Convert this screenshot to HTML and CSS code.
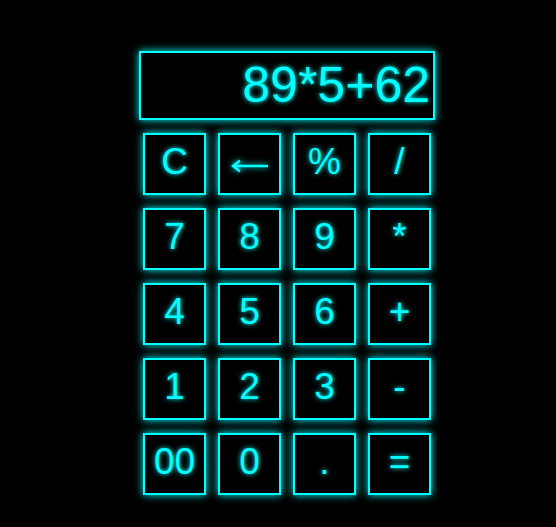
FILE: index.html
```html
<!DOCTYPE html>
<html>
<head>
<meta charset="utf-8">
<link rel="stylesheet" href="styles.css">
</head>
<body>
<div class="calc">
  <div class="display">89*5+62</div>
  <div class="keys">
    <div class="key">C</div>
    <div class="key"><svg class="arrow" width="38" height="14" viewBox="0 0 38 14" aria-label="←"><path d="M2 7 H37 M9 1.5 L2 7 L9 12.5" fill="none" stroke="#00ffff" stroke-width="2.4" stroke-linecap="butt" stroke-linejoin="miter"/></svg></div>
    <div class="key">%</div>
    <div class="key">/</div>
    <div class="key">7</div>
    <div class="key">8</div>
    <div class="key">9</div>
    <div class="key">*</div>
    <div class="key">4</div>
    <div class="key">5</div>
    <div class="key">6</div>
    <div class="key">+</div>
    <div class="key">1</div>
    <div class="key">2</div>
    <div class="key">3</div>
    <div class="key">-</div>
    <div class="key">00</div>
    <div class="key">0</div>
    <div class="key">.</div>
    <div class="key">=</div>
  </div>
</div>
</body>
</html>
```
FILE: styles.css
```css
html, body {
  margin: 0;
  background: #000;
  height: 100%;
}
body {
  font-family: "Liberation Sans", Arial, sans-serif;
  color: #00ffff;
}
.calc {
  padding: 51px 0 0 139px;
  width: 296px;
}
.display {
  box-sizing: border-box;
  width: 296px;
  height: 69px;
  border: 2px solid #00ffff;
  box-shadow: 0 0 8px #00ffff;
  font-size: 50px;
  line-height: 65px;
  text-align: right;
  padding-right: 3px;
  text-shadow: 0 0 5px #00ffff;
}
.keys {
  margin: 13px 4px 0;
  display: grid;
  grid-template-columns: repeat(4, 63px);
  grid-auto-rows: 62px;
  column-gap: 12px;
  row-gap: 13px;
}
.key {
  box-sizing: border-box;
  border: 2px solid #00ffff;
  box-shadow: 0 0 8px #00ffff;
  font-size: 37px;
  display: flex;
  align-items: center;
  justify-content: center;
  padding-bottom: 4px;
  text-shadow: 0 0 5px #00ffff;
}
.arrow {
  display: block;
  margin: 8px 0 0 0;
  filter: drop-shadow(0 0 3px #00ffff);
}
```
